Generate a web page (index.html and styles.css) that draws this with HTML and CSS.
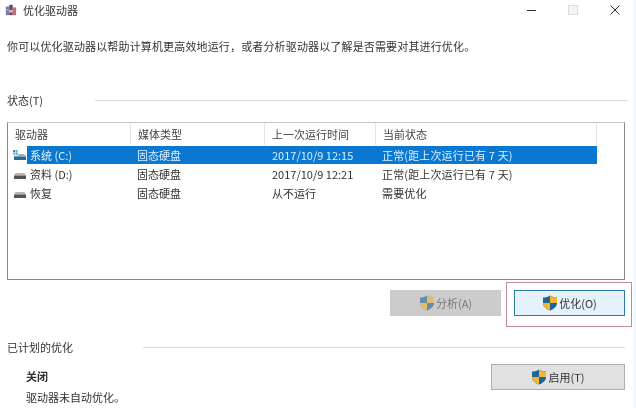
FILE: index.html
```html
<!DOCTYPE html>
<html lang="zh-CN">

<head>
    <meta charset="UTF-8">
    <title>优化驱动器</title>
    <link rel="stylesheet" href="styles.css">
</head>

<body>
    <svg class="defs" width="0" height="0">
        <symbol id="shield" viewBox="0 0 16 16">
            <path d="M8 .5C6 2 3.500 2.600 1 2.600V8c0 3.400 2.800 6 7 7.500C12.200 14 15 11.400 15 8V2.600C12.500 2.600 10 2 8 .5z" fill="#1f6496"/>
            <path d="M8 .5C10 2 12.500 2.600 15 2.600V8H8z" fill="#f2b632"/>
            <path d="M8 8H1c0 3.400 2.800 6 7 7.500z" fill="#f2b632"/>
        </symbol>
        <symbol id="drive" viewBox="0 0 12 12">
            <path d="M1.500 5h9l1.500 2.500H0z" fill="#b5b5b5"/>
            <rect x="0" y="7.500" width="12" height="3.500" fill="#4f5458"/>
        </symbol>
        <symbol id="sysdrive" viewBox="0 0 13 12">
            <rect x="0" y="1" width="2" height="2" fill="#2f8fc7"/>
            <rect x="2.500" y="1" width="2" height="2" fill="#59b0de"/>
            <rect x="0" y="3.500" width="2" height="2" fill="#59b0de"/>
            <rect x="2.500" y="3.500" width="2" height="2" fill="#2f8fc7"/>
            <path d="M5 5h6l2 2.500H1V6.500h4z" fill="#8fb4cc"/>
            <rect x="1" y="7.500" width="12" height="3.500" fill="#2c6a92"/>
        </symbol>
    </svg>

    <div class="window">
        <div class="titlebar">
            <svg class="app-icon" viewBox="0 0 14 14" width="12" height="12">
                <rect x="1" y="3" width="4" height="10" fill="#8a6fa8"/>
                <rect x="5" y="1" width="4" height="12" fill="#5a4a78"/>
                <rect x="9" y="4" width="4" height="9" fill="#c9678a"/>
                <rect x="5" y="7" width="4" height="3" fill="#e8c65a"/>
                <rect x="1" y="6" width="4" height="2" fill="#6fb0d8"/>
            </svg>
            <span class="title">优化驱动器</span>
            <div class="controls">
                <span class="ctl-min"></span>
                <span class="ctl-max"></span>
                <svg class="ctl-close" viewBox="0 0 10 10" width="10" height="10">
                    <path d="M.5.5l9 9M9.500.5l-9 9" stroke="#333" fill="none"/>
                </svg>
            </div>
        </div>

        <p class="intro">你可以优化驱动器以帮助计算机更高效地运行，或者分析驱动器以了解是否需要对其进行优化。</p>

        <div class="group-head status-head">
            <span class="group-label">状态(T)</span>
            <span class="group-line"></span>
        </div>

        <div class="list">
            <div class="list-row list-header">
                <div>驱动器</div>
                <div>媒体类型</div>
                <div>上一次运行时间</div>
                <div>当前状态</div>
            </div>
            <div class="drive-row">
                <svg class="drive-icon sys-icon"><use href="#sysdrive"/></svg>
                <div class="list-row selected">
                    <div>系统 (C:)</div>
                    <div>固态硬盘</div>
                    <div>2017/10/9 12:15</div>
                    <div>正常(距上次运行已有 7 天)</div>
                </div>
            </div>
            <div class="drive-row">
                <svg class="drive-icon"><use href="#drive"/></svg>
                <div class="list-row">
                    <div>资料 (D:)</div>
                    <div>固态硬盘</div>
                    <div>2017/10/9 12:21</div>
                    <div>正常(距上次运行已有 7 天)</div>
                </div>
            </div>
            <div class="drive-row">
                <svg class="drive-icon"><use href="#drive"/></svg>
                <div class="list-row">
                    <div>恢复</div>
                    <div>固态硬盘</div>
                    <div>从不运行</div>
                    <div>需要优化</div>
                </div>
            </div>
        </div>

        <div class="actions">
            <button class="btn btn-disabled" type="button">
                <svg width="16" height="16"><use href="#shield"/></svg>分析(A)
            </button>
            <div class="highlight">
                <button class="btn btn-focus" type="button">
                    <svg width="16" height="16"><use href="#shield"/></svg>优化(O)
                </button>
            </div>
        </div>

        <div class="group-head schedule-head">
            <span class="group-label">已计划的优化</span>
            <span class="group-line"></span>
        </div>

        <div class="schedule">
            <div class="schedule-text">
                <div class="schedule-state">关闭</div>
                <div class="schedule-note">驱动器未自动优化。</div>
            </div>
            <button class="btn btn-enable" type="button">
                <svg width="16" height="16"><use href="#shield"/></svg>启用(T)
            </button>
        </div>
    </div>
</body>

</html>
```

FILE: styles.css
```css
* {
    box-sizing: border-box;
}

html, body {
    margin: 0;
    padding: 0;
    height: 408px;
    overflow: hidden;
}

body {
    font-family: "Noto Sans CJK SC", "Liberation Sans", sans-serif;
    font-size: 11px;
    color: #333;
    background-color: #f1fbff;
}

.defs {
    position: absolute;
}

.window {
    width: 633px;
    height: 408px;
    background-color: #fff;
    padding: 0 8px 0 7px;
    overflow: hidden;
    filter: blur(.35px);
}

.titlebar {
    display: flex;
    align-items: center;
    height: 20px;
    margin-left: -2px;
}

.app-icon {
    margin-right: 6px;
}

.title {
    line-height: 20px;
}

.controls {
    display: flex;
    align-items: center;
    margin-left: auto;
    margin-right: 5px;
}

.ctl-min {
    width: 9px;
    height: 1px;
    background-color: #333;
    margin-right: 32px;
}

.ctl-max {
    width: 10px;
    height: 10px;
    border: 1px solid #ddd;
    background-color: #f4f4f4;
    margin-right: 32px;
}

.intro {
    margin: 17px 0 0;
    line-height: 18px;
    letter-spacing: .15px;
}

.group-head {
    display: flex;
    align-items: center;
    line-height: 16px;
}

.group-line {
    flex: 1;
    height: 1px;
    background-color: #dcdcdc;
}

.status-head {
    margin-top: 37px;
}

.status-head .group-label {
    width: 88px;
}

.status-head .group-line {
    margin-right: -3px;
}

.schedule-head {
    margin-top: 12px;
}

.schedule-head .group-label {
    width: 136px;
}

.list {
    height: 158px;
    margin-top: 14px;
    border: 1px solid #8a8a8a;
    border-top-color: #c4c4c4;
}

.list-row {
    display: grid;
    grid-template-columns: 104px 135px 110px 221px;
    align-items: center;
}

.list-header {
    height: 22px;
    width: 589px;
    grid-template-columns: 123px 134px 111px 221px;
    color: #444;
}

.list-header > div {
    height: 22px;
    line-height: 22px;
    padding-left: 7px;
    border-right: 1px solid #e6e6e6;
}

.drive-row {
    display: flex;
    align-items: flex-end;
    height: 19px;
    width: 589px;
}

.drive-icon {
    flex: none;
    width: 12px;
    height: 12px;
    margin: 0 1px 3px 6px;
}

.sys-icon {
    width: 13px;
    margin-left: 5px;
}

.drive-row .list-row {
    flex: 1;
    height: 18px;
    line-height: 18px;
}

.drive-row .list-row > div {
    padding-left: 3px;
}

.drive-row .list-row > div + div {
    padding-left: 6px;
}

.drive-row .list-row > div:last-child {
    letter-spacing: .15px;
}

.selected {
    background-color: #0a78d0;
    color: #dceeff;
}

.actions {
    display: flex;
    justify-content: flex-end;
    align-items: flex-start;
    margin-top: 2px;
    margin-right: -7px;
}

.btn {
    display: flex;
    align-items: center;
    justify-content: center;
    gap: 1px;
    height: 26px;
    padding: 0;
    font: inherit;
    color: #333;
    border: 1px solid #adadad;
    background-color: #e1e1e1;
}

.btn-disabled {
    width: 111px;
    margin-top: 8px;
    margin-right: 5px;
    border-color: #ccc;
    background-color: #ccc;
    color: #7a7a7a;
}

.btn-disabled svg {
    opacity: .6;
}

.highlight {
    width: 126px;
    height: 45px;
    padding: 7px 6px 7px 7px;
    border: 1px solid #c48c92;
}

.btn-focus {
    width: 111px;
    border-color: #2a7aa8;
    background-color: #e5f1fb;
}

.schedule {
    display: flex;
    justify-content: space-between;
    margin-top: 9px;
}

.schedule-text {
    padding: 3px 0 0 19px;
}

.schedule-state {
    font-weight: bold;
    line-height: 18px;
}

.schedule-note {
    margin-top: 3px;
    line-height: 18px;
}

.btn-enable {
    width: 134px;
}
```
